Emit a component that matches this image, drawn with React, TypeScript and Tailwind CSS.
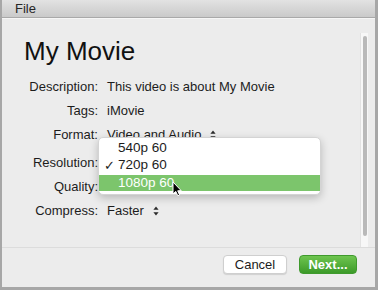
import React from "react";

function UpDown() {
  return (
    <svg width="6" height="10" viewBox="0 0 6 10" className="shrink-0">
      <path d="M3 0.5 L5.6 3.8 L0.4 3.8 Z" fill="#2a2a2a" />
      <path d="M3 9.5 L5.6 6.2 L0.4 6.2 Z" fill="#2a2a2a" />
    </svg>
  );
}

function Cursor() {
  return (
    <svg width="10" height="16" viewBox="0 0 10 16" className="absolute left-[73px] top-[6px]">
      <path
        d="M1 1 L1 13 L3.8 10.4 L5.8 14.8 L7.6 14 L5.7 9.8 L9.2 9.6 Z"
        fill="#000"
        stroke="#fff"
        strokeWidth="1"
        strokeLinejoin="round"
      />
    </svg>
  );
}

// values under the open menu are hidden in the screenshot
const rows: { label: string; value?: string; picker?: boolean; mt?: string }[] = [
  { label: "Description:", value: "This video is about My Movie" },
  { label: "Tags:", value: "iMovie" },
  { label: "Format:", value: "Video and Audio", picker: true },
  { label: "Resolution:", mt: "mt-[4px]" },
  { label: "Quality:" },
  { label: "Compress:", value: "Faster", picker: true },
];

export default function App() {
  return (
    <div className="w-[378px] h-[290px] bg-[#a7a7a7] pl-[2px] pr-[3px] pb-[3px] flex flex-col font-['Liberation_Sans',Arial,sans-serif] text-[#1c1c1c]">
      <div className="h-[18px] shrink-0 bg-gradient-to-b from-[#e2e2e2] to-[#cacaca] border-b border-[#a9a9a9] flex items-center pl-[13px] text-[13px] text-[#262626]">
        File
      </div>
      <div className="flex-1 flex flex-col bg-[#ececec] border-t border-[#f6f6f6]">
        <div className="flex-1 flex">
          <div className="flex-1 relative">
            <h1 className="pl-[22px] pt-[17px] text-[26px] leading-[30px] font-normal text-[#111]">My Movie</h1>
            <div className="mt-[9px] flex flex-col text-[13px]">
              {rows.map((r) => (
                <div key={r.label} className={`h-[24px] flex items-center ${r.mt ?? ""}`}>
                  <div className="w-[96px] text-right">{r.label}</div>
                  {r.value && (
                    <div className="ml-[9px] flex items-center gap-[9px]">
                      <span>{r.value}</span>
                      {r.picker && <UpDown />}
                    </div>
                  )}
                </div>
              ))}
            </div>
            <div className="absolute left-[96px] top-[118px] w-[223px] bg-white rounded-[5px] border border-[#d4d4d4] shadow-[0_3px_9px_rgba(0,0,0,0.22)] pt-[2px] pb-[3px] text-[13.5px]">
              <div className="h-[17px] flex items-center pl-[19px]">540p 60</div>
              <div className="h-[17px] flex items-center relative pl-[19px]">
                <span className="absolute left-[5px] text-[13px]">✓</span>
                720p 60
              </div>
              <div className="h-[16px] mt-[1px] flex items-center pl-[19px] bg-[#7cc56c] text-white relative">
                1080p 60
                <Cursor />
              </div>
            </div>
          </div>
          <div className="w-[15px] pt-[14px] pr-[7px] flex flex-col">
            <div className="flex-1 bg-[#f7f7f7] border-l border-[#e2e2e2] px-[2px] pt-[3px] pb-[11px]">
              <div className="h-full w-[4px] rounded-full bg-[#b9b9b9]" />
            </div>
          </div>
        </div>
        <div className="h-[40px] shrink-0 border-t border-[#dcdcdc] flex justify-end items-start pt-[7px] pr-[18px] gap-[12px] text-[13px]">
          <button className="h-[19px] w-[64px] bg-white rounded-[4px] border border-[#cfcfcf] shadow-[0_1px_1px_rgba(0,0,0,0.12)] text-[#1c1c1c] flex items-center justify-center">
            Cancel
          </button>
          <button className="h-[19px] w-[58px] rounded-[4px] bg-gradient-to-b from-[#6ec54f] to-[#3c9a29] border border-[#3f9a2d] text-white font-bold flex items-center justify-center">
            Next...
          </button>
        </div>
      </div>
    </div>
  );
}
